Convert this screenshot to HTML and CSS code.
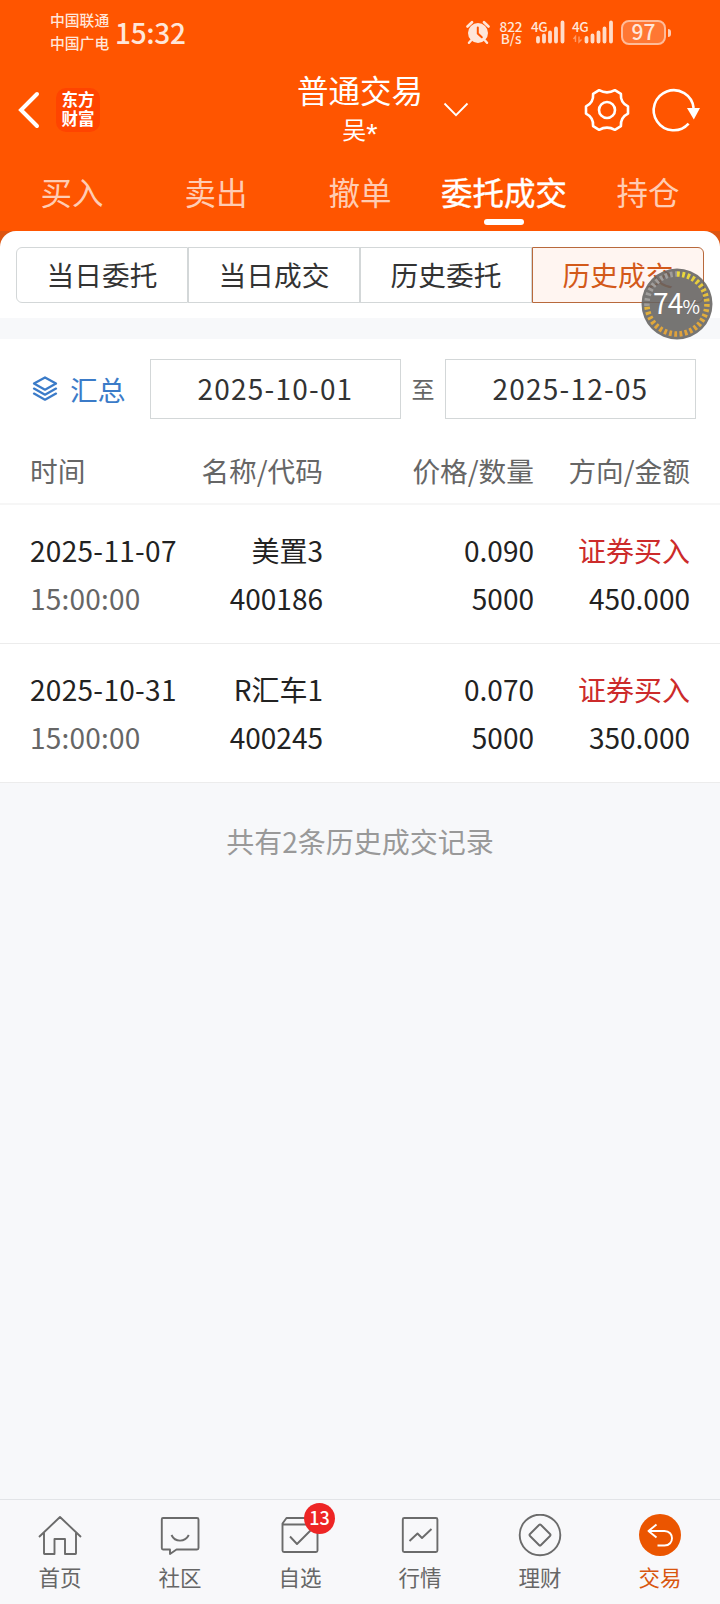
FILE: index.html
```html
<!DOCTYPE html>
<html lang="zh-CN">

<head>
    <meta charset="UTF-8">
    <meta name="viewport" content="width=device-width, initial-scale=1.0">
    <title>历史成交</title>
    <link rel="stylesheet" href="styles.css">
</head>

<body>
    <div class="app">
        <header class="header">
            <div class="status-bar">
                <div class="carriers">
                    <span>中国联通</span>
                    <span>中国广电</span>
                </div>
                <div class="clock">15:32</div>
                <div class="status-icons">
                    <svg class="alarm" width="24" height="24" viewBox="0 0 24 24">
                        <circle cx="12" cy="13" r="10" fill="#ffe6d9" />
                        <path d="M1.5 6.5 L6 2.2 M22.5 6.5 L18 2.2" stroke="#ffe6d9" stroke-width="2.6" stroke-linecap="round" />
                        <path d="M5 20.5 L3 22.8 M19 20.5 L21 22.8" stroke="#ffe6d9" stroke-width="2.4" stroke-linecap="round" />
                        <path d="M11.8 7.5 V13.5 L15.8 17.2" stroke="#ff5500" stroke-width="2" fill="none" stroke-linecap="round" />
                    </svg>
                    <div class="speed">
                        <span>822</span>
                        <span>B/s</span>
                    </div>
                    <div class="signal">
                        <span class="net">4G</span>
                        <svg width="34" height="24" viewBox="0 0 34 24">
                            <path d="M7 18 V21.5 M13 15.5 V21.5 M19 12.5 V21.5 M25 8.5 V21.5 M31.5 2.5 V21.5" stroke="#ffdcc9" stroke-width="3.8" stroke-linecap="round" />
                        </svg>
                    </div>
                    <div class="signal">
                        <span class="net">4G</span>
                        <svg width="42" height="24" viewBox="0 0 42 24">
                            <path d="M3.5 22 V16.5 L1.5 19 M7 16.5 V22 L9.5 19.5" stroke="#ff9a66" stroke-width="1.4" fill="none" />
                            <path d="M14.5 18 V21.5 M20.5 15.5 V21.5 M26.5 12.5 V21.5 M32.5 8.5 V21.5 M39 2.5 V21.5" stroke="#ffdcc9" stroke-width="3.8" stroke-linecap="round" />
                        </svg>
                    </div>
                    <div class="battery">97</div>
                </div>
            </div>

            <div class="title-bar">
                <div class="title-left">
                    <svg width="22" height="38" viewBox="0 0 22 38">
                        <path d="M19 3 L3 19 L19 35" fill="none" stroke="#fff" stroke-width="4" stroke-linecap="round" />
                    </svg>
                    <div class="logo">东方<br>财富</div>
                </div>
                <div class="title">
                    <div class="title-name">普通交易</div>
                    <div class="title-user">吴<span class="mask">*</span></div>
                </div>
                <div class="title-right">
                    <svg class="chevron" width="26" height="16" viewBox="0 0 26 16">
                        <path d="M1.5 1.5 L13 13.2 L24.5 1.5" fill="none" stroke="#fff" stroke-width="1.8" />
                    </svg>
                    <svg width="48" height="48" viewBox="-24 -24 48 48">
                        <path d="M21 -3.6 V3.6 Q13.2 7.4 13.9 16.2 L7.9 19.8 Q0 15.4 -7.9 19.8 L-13.9 16.2 Q-13.2 7.4 -21 3.6 V-3.6 Q-13.2 -7.4 -13.9 -16.2 L-7.9 -19.8 Q0 -15.4 7.9 -19.8 L13.9 -16.2 Q13.2 -7.4 21 -3.6 Z" fill="none" stroke="#fff" stroke-width="2.6" stroke-linejoin="round" />
                        <circle r="8" fill="none" stroke="#fff" stroke-width="2.6" />
                    </svg>
                    <svg class="refresh" width="50" height="48" viewBox="-24 -24 50 48">
                        <path d="M14.6 13.6 A20 20 0 1 1 19.6 -2" fill="none" stroke="#fff" stroke-width="2.6" />
                        <path d="M13 -2 H26 L19.8 9.5 Z" fill="#fff" />
                    </svg>
                </div>
            </div>

            <nav class="tabs">
                <div class="tab">买入</div>
                <div class="tab">卖出</div>
                <div class="tab">撤单</div>
                <div class="tab active">委托成交</div>
                <div class="tab">持仓</div>
            </nav>
        </header>

        <div class="segment-wrap">
            <div class="segment-panel">
                <div class="segments">
                    <div class="segment">当日委托</div>
                    <div class="segment">当日成交</div>
                    <div class="segment">历史委托</div>
                    <div class="segment active">历史成交</div>
                </div>
            </div>
        </div>

        <section class="records">
            <div class="filter">
                <div class="summary">
                    <svg width="26" height="26" viewBox="0 0 26 26">
                        <path d="M13 1.5 L24 7.6 L13 13.7 L2 7.6 Z" />
                        <path d="M2 12.6 L13 18.7 L24 12.6" />
                        <path d="M2 17.6 L13 23.7 L24 17.6" />
                    </svg>
                    <span>汇总</span>
                </div>
                <div class="date">2025-10-01</div>
                <div class="to">至</div>
                <div class="date">2025-12-05</div>
            </div>

            <div class="row row-head">
                <div>时间</div>
                <div>名称/代码</div>
                <div>价格/数量</div>
                <div>方向/金额</div>
            </div>
            <div class="row">
                <div class="date-text">2025-11-07</div>
                <div>美置3</div>
                <div>0.090</div>
                <div class="buy">证券买入</div>
                <div class="time">15:00:00</div>
                <div>400186</div>
                <div>5000</div>
                <div>450.000</div>
            </div>
            <div class="row">
                <div class="date-text">2025-10-31</div>
                <div>R汇车1</div>
                <div>0.070</div>
                <div class="buy">证券买入</div>
                <div class="time">15:00:00</div>
                <div>400245</div>
                <div>5000</div>
                <div>350.000</div>
            </div>
        </section>

        <div class="total">共有2条历史成交记录</div>

        <nav class="bottom-nav">
            <div class="nav-item">
                <svg width="44" height="44" viewBox="0 0 44 44">
                    <path d="M1 23 L22 3 L43 23 M6 19 V39.5 Q6 40 6.5 40 H16.5 V25 H27 V40 H37.5 Q38 40 38 39.5 V19" />
                </svg>
                <span>首页</span>
            </div>
            <div class="nav-item">
                <svg width="44" height="44" viewBox="0 0 44 44">
                    <path d="M5 4 H39 Q40.5 4 40.5 5.5 V34 Q40.5 35.5 39 35.5 H18.5 L12 40 V35.5 H5 Q3.8 35.5 3.8 34 V5.5 Q3.8 4 5 4 Z" />
                    <path d="M13.5 21 C17 28.5 27 28.5 30.8 21" />
                </svg>
                <span>社区</span>
            </div>
            <div class="nav-item">
                <svg width="44" height="44" viewBox="0 0 44 44">
                    <path d="M4.5 10.5 H39.5 V36.5 Q39.5 38 38 38 H6 Q4.5 38 4.5 36.5 V9.5 L8.5 4 H35.5 L39.5 9.5" />
                    <path d="M12 22.5 L19 30 L32.5 16.5" />
                </svg>
                <span>自选</span>
                <div class="badge">13</div>
            </div>
            <div class="nav-item">
                <svg width="44" height="44" viewBox="0 0 44 44">
                    <rect x="4.8" y="4" width="34.6" height="34" rx="1.5" />
                    <path d="M11.5 27 L19.5 19.5 L24 24 L33.5 15" />
                </svg>
                <span>行情</span>
            </div>
            <div class="nav-item">
                <svg width="44" height="44" viewBox="0 0 44 44">
                    <circle cx="22" cy="21" r="20.3" />
                    <path d="M21 11 Q22 10 23 11 L32 20 Q33 21 32 22 L23 31 Q22 32 21 31 L12 22 Q11 21 12 20 Z" />
                </svg>
                <span>理财</span>
            </div>
            <div class="nav-item active">
                <svg width="44" height="44" viewBox="0 0 44 44">
                    <circle class="disc" cx="22" cy="21" r="21" />
                    <path d="M18.5 10.5 L10.5 17 L18.5 23.5 M10.5 17 H26.5 C36.5 17 36.5 31.5 26.5 31.5 H19.5" />
                </svg>
                <span>交易</span>
            </div>
        </nav>

        <!-- floating battery ball -->
        <div class="ball">
            <svg width="72" height="72" viewBox="0 0 72 72">
                <defs>
                    <linearGradient id="charge" x1="0" y1="0" x2="0" y2="1">
                        <stop offset="0" stop-color="#ead83c" />
                        <stop offset="0.5" stop-color="#e3b53c" />
                        <stop offset="1" stop-color="#dfa13c" />
                    </linearGradient>
                </defs>
                <circle cx="36" cy="36" r="35.5" fill="#646260" fill-opacity="0.88" />
                <path d="M6 38 A30 30 0 0 1 36 6" pathLength="28" fill="none" stroke="#a09d9b" stroke-width="5.5" stroke-dasharray="1.5 1.5" />
                <path d="M36 6 A30 30 0 1 1 6 38" pathLength="80" fill="none" stroke="url(#charge)" stroke-width="5.5" stroke-dasharray="1.6 1.4" />
            </svg>
            <div class="ball-text">74<small>%</small></div>
        </div>
    </div>
</body>

</html>
```

FILE: styles.css
```css
* {
    margin: 0;
    padding: 0;
    box-sizing: border-box;
}

body {
    background-color: #f7f8fa;
    color: #222;
    font-family: "Noto Sans CJK SC", sans-serif;
    font-size: 28px;
}

svg {
    display: block;
    flex-shrink: 0;
}

.app {
    position: relative;
    display: flex;
    flex-direction: column;
    width: 720px;
    height: 1604px;
    overflow: hidden;
}

/* header */
.header {
    height: 231px;
    background-color: #ff5500;
    color: #fff;
}

.status-bar {
    display: flex;
    align-items: center;
    height: 64px;
    padding: 0 54px 0 50px;
    color: #ffe6d9;
}

.carriers {
    display: flex;
    flex-direction: column;
    width: 60px;
    padding-bottom: 2px;
    font-size: 14.8px;
    font-weight: 500;
    line-height: 23px;
    white-space: nowrap;
}

.clock {
    margin-left: 5px;
    font-size: 28px;
    font-weight: 500;
    line-height: 64px;
    letter-spacing: -0.3px;
}

.status-icons {
    display: flex;
    align-items: center;
    margin-left: auto;
}

.speed {
    display: flex;
    flex-direction: column;
    width: 26px;
    margin-left: 8px;
    font-size: 13.5px;
    font-weight: 500;
    line-height: 12px;
    text-align: center;
}

.signal {
    position: relative;
    margin-left: 7px;
}

.net {
    position: absolute;
    top: 0;
    left: 0;
    font-size: 13.5px;
    font-weight: 500;
    line-height: 12px;
    letter-spacing: -0.5px;
}

.battery {
    position: relative;
    width: 45px;
    height: 25px;
    margin-left: 7px;
    border: 2px solid #ffbb99;
    border-radius: 8px;
    background-color: #ff7733;
    font-size: 21px;
    font-weight: 500;
    line-height: 19px;
    text-align: center;
}

.battery::after {
    content: '';
    position: absolute;
    top: 7px;
    right: -7px;
    width: 3px;
    height: 8px;
    border-radius: 0 3px 3px 0;
    background-color: #ffccb3;
}

.title-bar {
    display: grid;
    grid-template-columns: 1fr 160px 1fr;
    align-items: center;
    height: 90px;
    padding-top: 2px;
}

.title-left {
    display: flex;
    align-items: center;
    gap: 16px;
    padding-left: 18px;
}

.logo {
    width: 44px;
    height: 44px;
    padding-top: 2px;
    border-radius: 10px;
    background-color: #ff4400;
    font-size: 16.5px;
    font-weight: 700;
    line-height: 19px;
    text-align: center;
}

.title {
    padding-bottom: 6px;
    text-align: center;
}

.title-name {
    font-size: 31.5px;
    line-height: 44px;
}

.title-user {
    font-size: 24px;
    line-height: 36px;
}

.mask {
    display: inline-block;
    font-family: "Liberation Sans", sans-serif;
    font-size: 29px;
    line-height: 20px;
    vertical-align: -5px;
}

.title-right {
    display: flex;
    align-items: center;
    padding-left: 3px;
}

.chevron {
    margin-right: 114px;
}

.refresh {
    margin-left: 19px;
}

.tabs {
    display: grid;
    grid-template-columns: repeat(5, 144px);
    height: 77px;
}

.tab {
    position: relative;
    color: #ffccb3;
    font-size: 31.5px;
    line-height: 75px;
    text-align: center;
}

.tab.active {
    color: #fff;
    -webkit-text-stroke: 0.4px #fff;
}

.tab.active::after {
    content: '';
    position: absolute;
    bottom: 6px;
    left: 52px;
    width: 40px;
    height: 6px;
    border-radius: 3px;
    background-color: #fff;
}

/* segmented control */
.segment-wrap {
    background-color: #dd5511;
}

.segment-panel {
    height: 87px;
    padding: 16px;
    border-radius: 16px 16px 0 0;
    background-color: #fff;
}

.segments {
    display: grid;
    grid-template-columns: repeat(4, 172px);
}

.segment {
    height: 56px;
    border: 1px solid #d3d7d8;
    color: #333;
    font-size: 27.7px;
    line-height: 53px;
    text-align: center;
}

.segment:first-child {
    border-radius: 6px 0 0 6px;
}

.segment.active {
    border-color: #b8693c;
    border-radius: 0 6px 6px 0;
    background-color: #fff5f1;
    color: #d3591a;
}

/* records */
.records {
    margin-top: 21px;
    background-color: #fff;
}

.filter {
    display: flex;
    align-items: center;
    height: 100px;
    padding: 0 24px 0 32px;
}

.summary {
    display: flex;
    align-items: center;
    width: 118px;
    gap: 12px;
    color: #3b7bc8;
    font-size: 27.7px;
    line-height: 54px;
}

.summary svg {
    fill: none;
    stroke: #3b7bc8;
    stroke-width: 2.3;
    stroke-linejoin: round;
    stroke-linecap: round;
}

.date {
    width: 251px;
    height: 60px;
    border: 1px solid #d3d7d8;
    color: #333;
    font-size: 28px;
    line-height: 57px;
    letter-spacing: 1.2px;
    text-align: center;
}

.to {
    width: 44px;
    padding-bottom: 3px;
    color: #666;
    font-size: 23px;
    line-height: 56px;
    text-align: center;
}

.row {
    display: grid;
    grid-template-columns: 150px 143px 211px 156px;
    height: 139px;
    padding: 21px 30px 0;
    border-bottom: 1px solid #ececec;
    line-height: 48px;
    text-align: right;
    align-content: start;
}

.row > div {
    white-space: nowrap;
}

.row > div:nth-child(4n + 1) {
    text-align: left;
}

.row-head {
    height: 66px;
    padding-top: 7px;
    border-bottom: 2px solid #f6f6f6;
    color: #666;
    font-size: 27.7px;
}

.date-text {
    letter-spacing: 0.3px;
}

.time {
    color: #666;
    letter-spacing: 0.2px;
}

.buy {
    color: #cc2b2b;
}

.total {
    margin-top: 38px;
    color: #999;
    line-height: 40px;
    text-align: center;
}

/* bottom navigation */
.bottom-nav {
    display: grid;
    grid-template-columns: repeat(6, 120px);
    height: 105px;
    margin-top: auto;
    border-top: 1px solid #e2e4e7;
    background-color: #f8f8fa;
}

.nav-item {
    position: relative;
    display: flex;
    flex-direction: column;
    align-items: center;
    padding-top: 14px;
    color: #666;
    font-size: 21.5px;
    line-height: 38px;
}

.nav-item svg {
    fill: none;
    stroke: #6b6b6b;
    stroke-width: 1.9;
    stroke-linejoin: round;
}

.nav-item.active {
    color: #d9560f;
}

.nav-item.active svg {
    stroke: #fff;
}

.nav-item .disc {
    fill: #eb5500;
    stroke: none;
}

.badge {
    position: absolute;
    top: 3px;
    left: 64px;
    width: 31px;
    height: 31px;
    border-radius: 50%;
    background-color: #ee2525;
    color: #fff;
    font-size: 18px;
    font-weight: 500;
    line-height: 29px;
    text-align: center;
}

/* floating ball */
.ball {
    position: absolute;
    top: 268px;
    left: 640.5px;
    width: 72px;
    height: 72px;
}

.ball-text {
    position: absolute;
    top: 0;
    left: 0;
    width: 71px;
    color: #fff;
    font-size: 28px;
    line-height: 68px;
    letter-spacing: -0.8px;
    text-align: center;
}

.ball-text small {
    font-size: 19px;
}
```
